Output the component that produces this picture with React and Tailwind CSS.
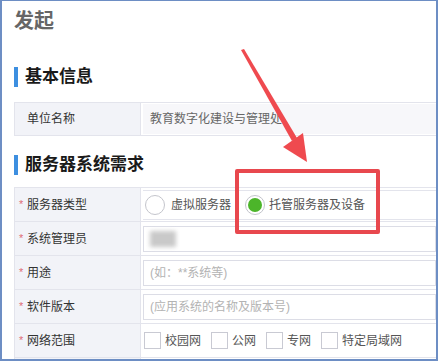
import React from "react";

const font = { fontFamily: '"Liberation Sans", "Noto Sans CJK SC", sans-serif' };

const SectionTitle = ({ children, className = "" }) => (
  <div className={`flex items-center gap-[7px] ${className}`}>
    <span className="w-[4px] h-[20px] bg-[#3d8fe0]" />
    <span className="text-[17px] leading-[22px] font-bold text-[#1a1a1a]">{children}</span>
  </div>
);

const Row = ({ label, required, children }) => (
  <div className="flex h-[34px] border-b border-[#e3e4ec]">
    <div className="w-[126px] shrink-0 bg-[#f2f3f8] border-r border-[#e3e4ec] flex items-center pl-[4px] text-[12px] text-[#333]">
      {required && <span className="text-[#e06c75] w-[8px] text-[11px]">*</span>}
      <span>{label}</span>
    </div>
    <div className="flex-1 flex items-center pl-[2px] overflow-hidden">{children}</div>
  </div>
);

const Input = ({ children, muted }) => (
  <div
    className={`h-[26px] w-full border border-[#dcdde6] bg-white flex items-center pl-[6px] text-[12px] whitespace-nowrap ${
      muted ? "text-[#b3b3b3]" : "text-[#555]"
    }`}
  >
    {children}
  </div>
);

const Check = ({ label }) => (
  <div className="flex items-center gap-[4px] mr-[10px]">
    <span className="w-[17px] h-[17px] border border-[#c9cad3] bg-white" />
    <span className="text-[12px] text-[#555]">{label}</span>
  </div>
);

export default function App() {
  return (
    <div
      style={font}
      className="relative w-[438px] h-[361px] overflow-hidden bg-white border-2 border-t border-[#6d8ec4]"
    >
      <div className="pl-[12px]">
        <div className="pt-[6px] text-[20px] leading-[28px] font-bold text-[#666]">发起</div>

        <SectionTitle className="mt-[31px]">基本信息</SectionTitle>

        <div className="mt-[14px] border-t border-b border-l border-[#e3e4ec] flex h-[34px]">
          <div className="w-[126px] shrink-0 bg-[#f2f3f8] border-r border-[#e3e4ec] flex items-center pl-[12px] text-[12px] text-[#333]">
            单位名称
          </div>
          <div className="flex-1 flex items-center pl-[2px]">
            <div className="h-[30px] w-[146px] bg-[#f7f7fa] flex items-center pl-[7px] text-[12px] text-[#666] whitespace-nowrap">
              教育数字化建设与管理处
            </div>
            <div className="h-[30px] flex-1 bg-[#f7f7fa]" />
          </div>
        </div>

        <SectionTitle className="mt-[18px]">服务器系统需求</SectionTitle>

        <div className="mt-[11px] border-t border-l border-[#e3e4ec]">
          <Row label="服务器类型" required>
            <div className="flex items-center h-[30px] w-full border-y border-[#e3e4ec]">
              <span className="ml-[2px] w-[20px] h-[20px] rounded-full border border-[#c4c5cc] bg-white" />
              <span className="ml-[6px] text-[12px] text-[#555]">虚拟服务器</span>
              <span className="ml-[14px] w-[20px] h-[20px] rounded-full border border-[#c4c5cc] bg-white flex items-center justify-center">
                <span className="w-[14px] h-[14px] rounded-full bg-[#4cb52a]" />
              </span>
              <span className="ml-[4px] text-[12px] text-[#555]">托管服务器及设备</span>
            </div>
          </Row>
          <Row label="系统管理员" required>
            <Input>
              <span className="w-[26px] h-[16px] bg-[#c9c9c9] blur-[2px]" />
            </Input>
          </Row>
          <Row label="用途" required>
            <Input muted>(如：**系统等)</Input>
          </Row>
          <Row label="软件版本" required>
            <Input muted>(应用系统的名称及版本号)</Input>
          </Row>
          <Row label="网络范围" required>
            <div className="flex items-center pl-[1px]">
              <Check label="校园网" />
              <Check label="公网" />
              <Check label="专网" />
              <Check label="特定局域网" />
            </div>
          </Row>
          <Row label="">
            <Input />
          </Row>
        </div>
      </div>

      {/* annotation box */}
      <div className="absolute left-[233px] top-[168px] w-[145px] h-[65px] border-[4px] border-[#e8484e] rounded-[2px]" />

      {/* annotation arrow */}
      <svg className="absolute left-0 top-0" width="438" height="361" viewBox="0 0 438 361">
        <path d="M239 49 L242 48 L295 137 L290 140 Z" fill="#ef4a4f" />
        <path d="M281 146 L301 132 L305 161 Z" fill="#ef4a4f" />
      </svg>
    </div>
  );
}
